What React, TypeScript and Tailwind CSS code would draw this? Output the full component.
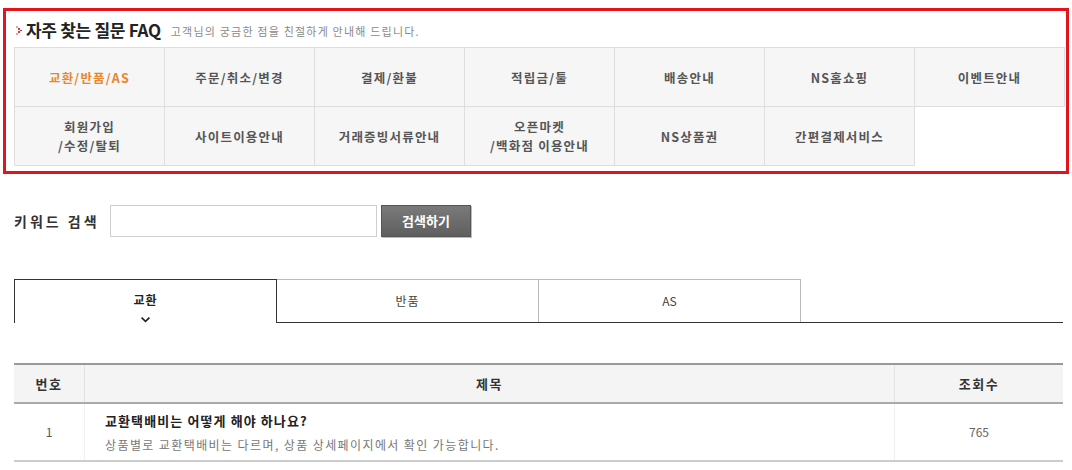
const font = { fontFamily: '"Noto Sans CJK KR", "Noto Sans", sans-serif' };

const categories: { label: string[]; active?: boolean }[] = [
    { label: ['교환/반품/AS'], active: true },
    { label: ['주문/취소/변경'] },
    { label: ['결제/환불'] },
    { label: ['적립금/툴'] },
    { label: ['배송안내'] },
    { label: ['NS홈쇼핑'] },
    { label: ['이벤트안내'] },
    { label: ['회원가입', '/수정/탈퇴'] },
    { label: ['사이트이용안내'] },
    { label: ['거래증빙서류안내'] },
    { label: ['오픈마켓', '/백화점 이용안내'] },
    { label: ['NS상품권'] },
    { label: ['간편결제서비스'] },
];

function TitleIcon() {
    return (
        <svg width="6" height="9" viewBox="0 0 6 9" className="mr-[4px] mt-[2px]">
            <rect x="0" y="0" width="2" height="2" fill="#e8a0a0" />
            <rect x="2" y="2" width="2" height="2" fill="#d43c3c" />
            <rect x="4" y="4" width="2" height="1" fill="#c81e1e" />
            <rect x="2" y="5" width="2" height="2" fill="#d43c3c" />
            <rect x="0" y="7" width="2" height="2" fill="#e8a0a0" />
        </svg>
    );
}

function Chevron() {
    return (
        <svg width="9" height="6" viewBox="0 0 9 6" className="mt-[9px]">
            <path d="M0 1.2 L1.2 0 L4.5 3.2 L7.8 0 L9 1.2 L4.5 5.6 Z" fill="#222" />
        </svg>
    );
}

export default function App() {
    return (
        <div className="w-[1072px] h-[470px] bg-white overflow-hidden pt-[8px] px-[3px]" style={font}>
            <div className="border-[3px] border-[#e3141b] pl-[8px] pr-[3px] pb-[5px]">
                <div className="flex items-center h-[36px] pl-[2px] pt-[1px]">
                    <TitleIcon />
                    <span className="text-[17px] font-bold text-[#222] tracking-[-0.3px]">자주 찾는 질문 FAQ</span>
                    <span className="ml-[10px] text-[11px] text-[#8a8a8a] mt-[3px] tracking-[1.2px]">고객님의 궁금한 점을 친절하게 안내해 드립니다.</span>
                </div>
                <div className="grid grid-cols-[repeat(7,150px)] border-l border-t border-[#dedede] w-fit">
                    {categories.map((c, i) => (
                        <div
                            key={i}
                            className={`h-[59px] bg-[#f6f6f6] border-r border-b border-[#dedede] flex flex-col items-center justify-center text-[12.5px] font-bold leading-[19px] tracking-[1.2px] ${c.active ? 'text-[#e8872c]' : 'text-[#555]'}`}
                        >
                            {c.label.map((l) => (
                                <span key={l}>{l}</span>
                            ))}
                        </div>
                    ))}
                </div>
            </div>

            <div className="flex items-center mt-[31px] pl-[11px]">
                <span className="text-[14px] font-bold text-[#333] w-[96px] tracking-[3px]">키워드 검색</span>
                <input className="w-[267px] h-[32px] border border-[#cfcfcf] outline-none px-2 text-[13px]" />
                <button className="ml-[4px] w-[90px] h-[32px] bg-gradient-to-b from-[#7a7a7a] to-[#5f5f5f] border border-[#555] text-white text-[13px] font-bold shadow-[1px_1px_0_#bbb]">
                    검색하기
                </button>
            </div>

            <div className="flex mt-[42px] pl-[11px] pr-[6px]">
                <div className="w-[263px] h-[44px] border-t border-l border-r border-[#333] flex flex-col items-center pt-[12px]">
                    <span className="text-[12px] font-bold text-[#222] leading-[16px] tracking-[1px]">교환</span>
                    <Chevron />
                </div>
                <div className="flex flex-1 border-b border-[#333] h-[44px]">
                    <div className="w-[262px] h-[43px] border-t border-r border-[#bbb] flex items-center justify-center text-[12px] text-[#444] tracking-[1px]">반품</div>
                    <div className="w-[262px] h-[43px] border-t border-r border-[#bbb] flex items-center justify-center text-[12px] text-[#444]">AS</div>
                </div>
            </div>

            <div className="mt-[40px] ml-[11px] mr-[6px] border-t-2 border-[#999]">
                <div className="flex h-[39px] bg-[#f4f4f4] border-b-2 border-[#aaa] text-[13px] font-bold text-[#333] tracking-[1.5px]">
                    <div className="w-[71px] flex items-center justify-center border-r border-[#e2e2e2]">번호</div>
                    <div className="flex-1 flex items-center justify-center">제목</div>
                    <div className="w-[169px] flex items-center justify-center border-l border-[#e2e2e2]">조회수</div>
                </div>
                <div className="flex h-[58px] border-b-2 border-[#ccc]">
                    <div className="w-[71px] flex items-center justify-center border-r border-[#f0f0f0] text-[12px] text-[#555]">1</div>
                    <div className="flex-1 pl-[20px] pt-[8px]">
                        <div className="text-[13px] font-bold text-[#222] leading-[18px] tracking-[1.1px]">교환택배비는 어떻게 해야 하나요?</div>
                        <div className="text-[12px] text-[#777] mt-[7px] leading-[16px] tracking-[1.4px]">상품별로 교환택배비는 다르며, 상품 상세페이지에서 확인 가능합니다.</div>
                    </div>
                    <div className="w-[169px] flex items-center justify-center border-l border-[#f0f0f0] text-[12px] text-[#666]">765</div>
                </div>
            </div>
        </div>
    );
}
